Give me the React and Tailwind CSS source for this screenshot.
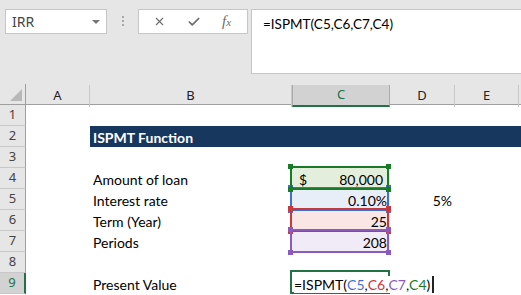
import { X, Check } from "lucide-react";

// column template shared by the header row and every sheet row
const GRID = "grid grid-cols-[26px_64px_202px_98px_65px_64px_1fr]";

function FormulaArea() {
  return (
    <div className="flex h-[84px] items-start bg-[#e6e6e6] pl-[5px] pt-[9px] font-['Noto_Sans',sans-serif]">
      {/* name box */}
      <div className="flex h-[25px] w-[102px] items-center justify-between border border-[#c6c6c6] bg-white pl-[6px] pr-[6px]">
        <span className="text-[14px] text-[#444]">IRR</span>
        <span className="h-0 w-0 border-x-[4px] border-t-[4px] border-x-transparent border-t-[#777]" />
      </div>

      {/* drag dots */}
      <div className="ml-[15px] mt-[7px] flex flex-col gap-[2px]">
        <span className="h-[2px] w-[2px] bg-[#a8a8a8]" />
        <span className="h-[2px] w-[2px] bg-[#a8a8a8]" />
        <span className="h-[2px] w-[2px] bg-[#a8a8a8]" />
      </div>

      {/* cancel / enter / fx buttons */}
      <div className="ml-[14px] flex h-[25px] w-[110px] items-center border border-[#c6c6c6] bg-white">
        <X className="ml-[14px] h-[13px] w-[13px] text-[#6b6b6b]" strokeWidth={2} />
        <Check className="ml-[21px] h-[14px] w-[14px] text-[#6b6b6b]" strokeWidth={3} />
        <span className="ml-[21px] font-['Liberation_Serif',serif] text-[15px] italic text-[#6b6b6b]">
          f<span className="text-[11px]">x</span>
        </span>
      </div>

      {/* formula bar */}
      <div className="ml-[3px] h-[65px] flex-1 border-y border-l border-[#c6c6c6] bg-white pl-[11px] pt-[4px] font-['Lato',sans-serif] text-[13.5px] text-black">
        =ISPMT(C5,C6,C7,C4)
      </div>
    </div>
  );
}

function ColumnHeaders() {
  return (
    <div className={`${GRID} h-[21px] border-b border-[#9f9f9f] bg-[#e6e6e6] font-['Noto_Sans',sans-serif] text-[13px] text-[#222]`}>
      <div className="relative border-r border-[#9f9f9f]">
        <svg className="absolute left-[10px] top-[5px]" width="12" height="12" viewBox="0 0 12 12">
          <polygon points="12,0 12,12 0,12" fill="#b8b8b8" />
        </svg>
      </div>
      <div className="mt-px flex items-center justify-center border-r border-[#c8c8c8]">A</div>
      <div className="mt-px flex items-center justify-center border-r border-[#c8c8c8]">B</div>
      <div className="mt-px flex items-center justify-center border-x border-b-2 border-[#ababab] border-b-[#217346] bg-[#d2d2d2] text-[#217346]">
        C
      </div>
      <div className="mt-px flex items-center justify-center border-r border-[#c8c8c8]">D</div>
      <div className="mt-px flex items-center justify-center border-r border-[#c8c8c8]">E</div>
      <div />
    </div>
  );
}

function RowHead({ n, active }) {
  if (active) {
    return (
      <div className="flex items-center justify-center border-b border-r-2 border-[#c8c8c8] border-r-[#217346] bg-[#d2d2d2] font-['Noto_Sans',sans-serif] text-[13px] text-[#217346]">
        {n}
      </div>
    );
  }
  return (
    <div className="flex items-center justify-center border-b border-r border-[#c8c8c8] border-r-[#9f9f9f] bg-[#e6e6e6] font-['Noto_Sans',sans-serif] text-[13px] text-[#444]">
      {n}
    </div>
  );
}

// coloured range outline that Excel draws round each referenced cell
function RefBox({ border, dot, z }) {
  return (
    <div className={`pointer-events-none absolute -left-[2px] -top-[2px] -bottom-[1px] right-[1px] border-2 ${border} ${z}`}>
      <span className={`absolute -left-[4px] -top-[4px] h-[5px] w-[5px] ${dot}`} />
      <span className={`absolute -right-[4px] -top-[4px] h-[5px] w-[5px] ${dot}`} />
      <span className={`absolute -bottom-[4px] -left-[4px] h-[5px] w-[5px] ${dot}`} />
      <span className={`absolute -bottom-[4px] -right-[4px] h-[5px] w-[5px] ${dot}`} />
    </div>
  );
}

function Row({ n, active, children }) {
  return (
    <div className={`${GRID} h-[21px] text-[14px]`}>
      <RowHead n={n} active={active} />
      {children}
    </div>
  );
}

const cell = "flex items-end pb-[1px] leading-[17px]";

export default function App() {
  return (
    <div className="h-[295px] w-[521px] overflow-hidden bg-white font-['Lato',sans-serif] text-black">
      <FormulaArea />
      <ColumnHeaders />

      <Row n={1}>
        <div /><div /><div /><div /><div /><div />
      </Row>

      <Row n={2}>
        <div />
        <div className={`${cell} bg-[#17375e] pl-[3px] font-bold text-white`}>ISPMT Function</div>
        <div className="bg-[#17375e]" />
        <div className="bg-[#17375e]" />
        <div className="bg-[#17375e]" />
        <div className="bg-[#17375e]" />
      </Row>

      <Row n={3}>
        <div /><div /><div /><div /><div /><div />
      </Row>

      <Row n={4}>
        <div />
        <div className={`${cell} pl-[3px]`}>Amount of loan</div>
        <div className={`${cell} relative justify-between bg-[#e3efdc] pl-[7px] pr-[7px]`}>
          <span>$</span>
          <span>80,000</span>
          <RefBox border="border-[#1a7b26]" dot="bg-[#1a7b26]" z="z-20" />
        </div>
        <div /><div /><div />
      </Row>

      <Row n={5}>
        <div />
        <div className={`${cell} pl-[3px]`}>Interest rate</div>
        <div className={`${cell} relative justify-end bg-[#e8eef8] pr-[3px]`}>
          0.10%
          <RefBox border="border-[#3f72c6]" dot="bg-[#3f72c6]" z="z-10" />
        </div>
        <div className={`${cell} justify-end pr-[3px]`}>5%</div>
        <div /><div />
      </Row>

      <Row n={6}>
        <div />
        <div className={`${cell} pl-[3px]`}>Term (Year)</div>
        <div className={`${cell} relative justify-end bg-[#fbe6e6] pr-[3px]`}>
          25
          <RefBox border="border-[#c8393f]" dot="bg-[#c8393f]" z="z-20" />
        </div>
        <div /><div /><div />
      </Row>

      <Row n={7}>
        <div />
        <div className={`${cell} pl-[3px]`}>Periods</div>
        <div className={`${cell} relative justify-end bg-[#f0ebf7] pr-[3px]`}>
          208
          <RefBox border="border-[#8a5bbd]" dot="bg-[#8a5bbd]" z="z-30" />
        </div>
        <div /><div /><div />
      </Row>

      <Row n={8}>
        <div /><div /><div /><div /><div /><div />
      </Row>

      <Row n={9} active>
        <div />
        <div className={`${cell} pl-[3px]`}>Present Value</div>
        <div className={`${cell} relative pl-[2px]`}>
          <div className="pointer-events-none absolute -left-[2px] -top-[3px] bottom-0 right-0 border-2 border-[#217346]" />
          <span className="relative z-10 flex items-end whitespace-nowrap bg-white">
            =ISPMT(
            <span className="text-[#3f72c6]">C5</span>,
            <span className="text-[#c8393f]">C6</span>,
            <span className="text-[#8a5bbd]">C7</span>,
            <span className="text-[#1a7b26]">C4</span>)
            <span className="ml-[2px] inline-block h-[17px] w-[2px] bg-[#222]" />
          </span>
        </div>
        <div /><div /><div />
      </Row>
    </div>
  );
}
